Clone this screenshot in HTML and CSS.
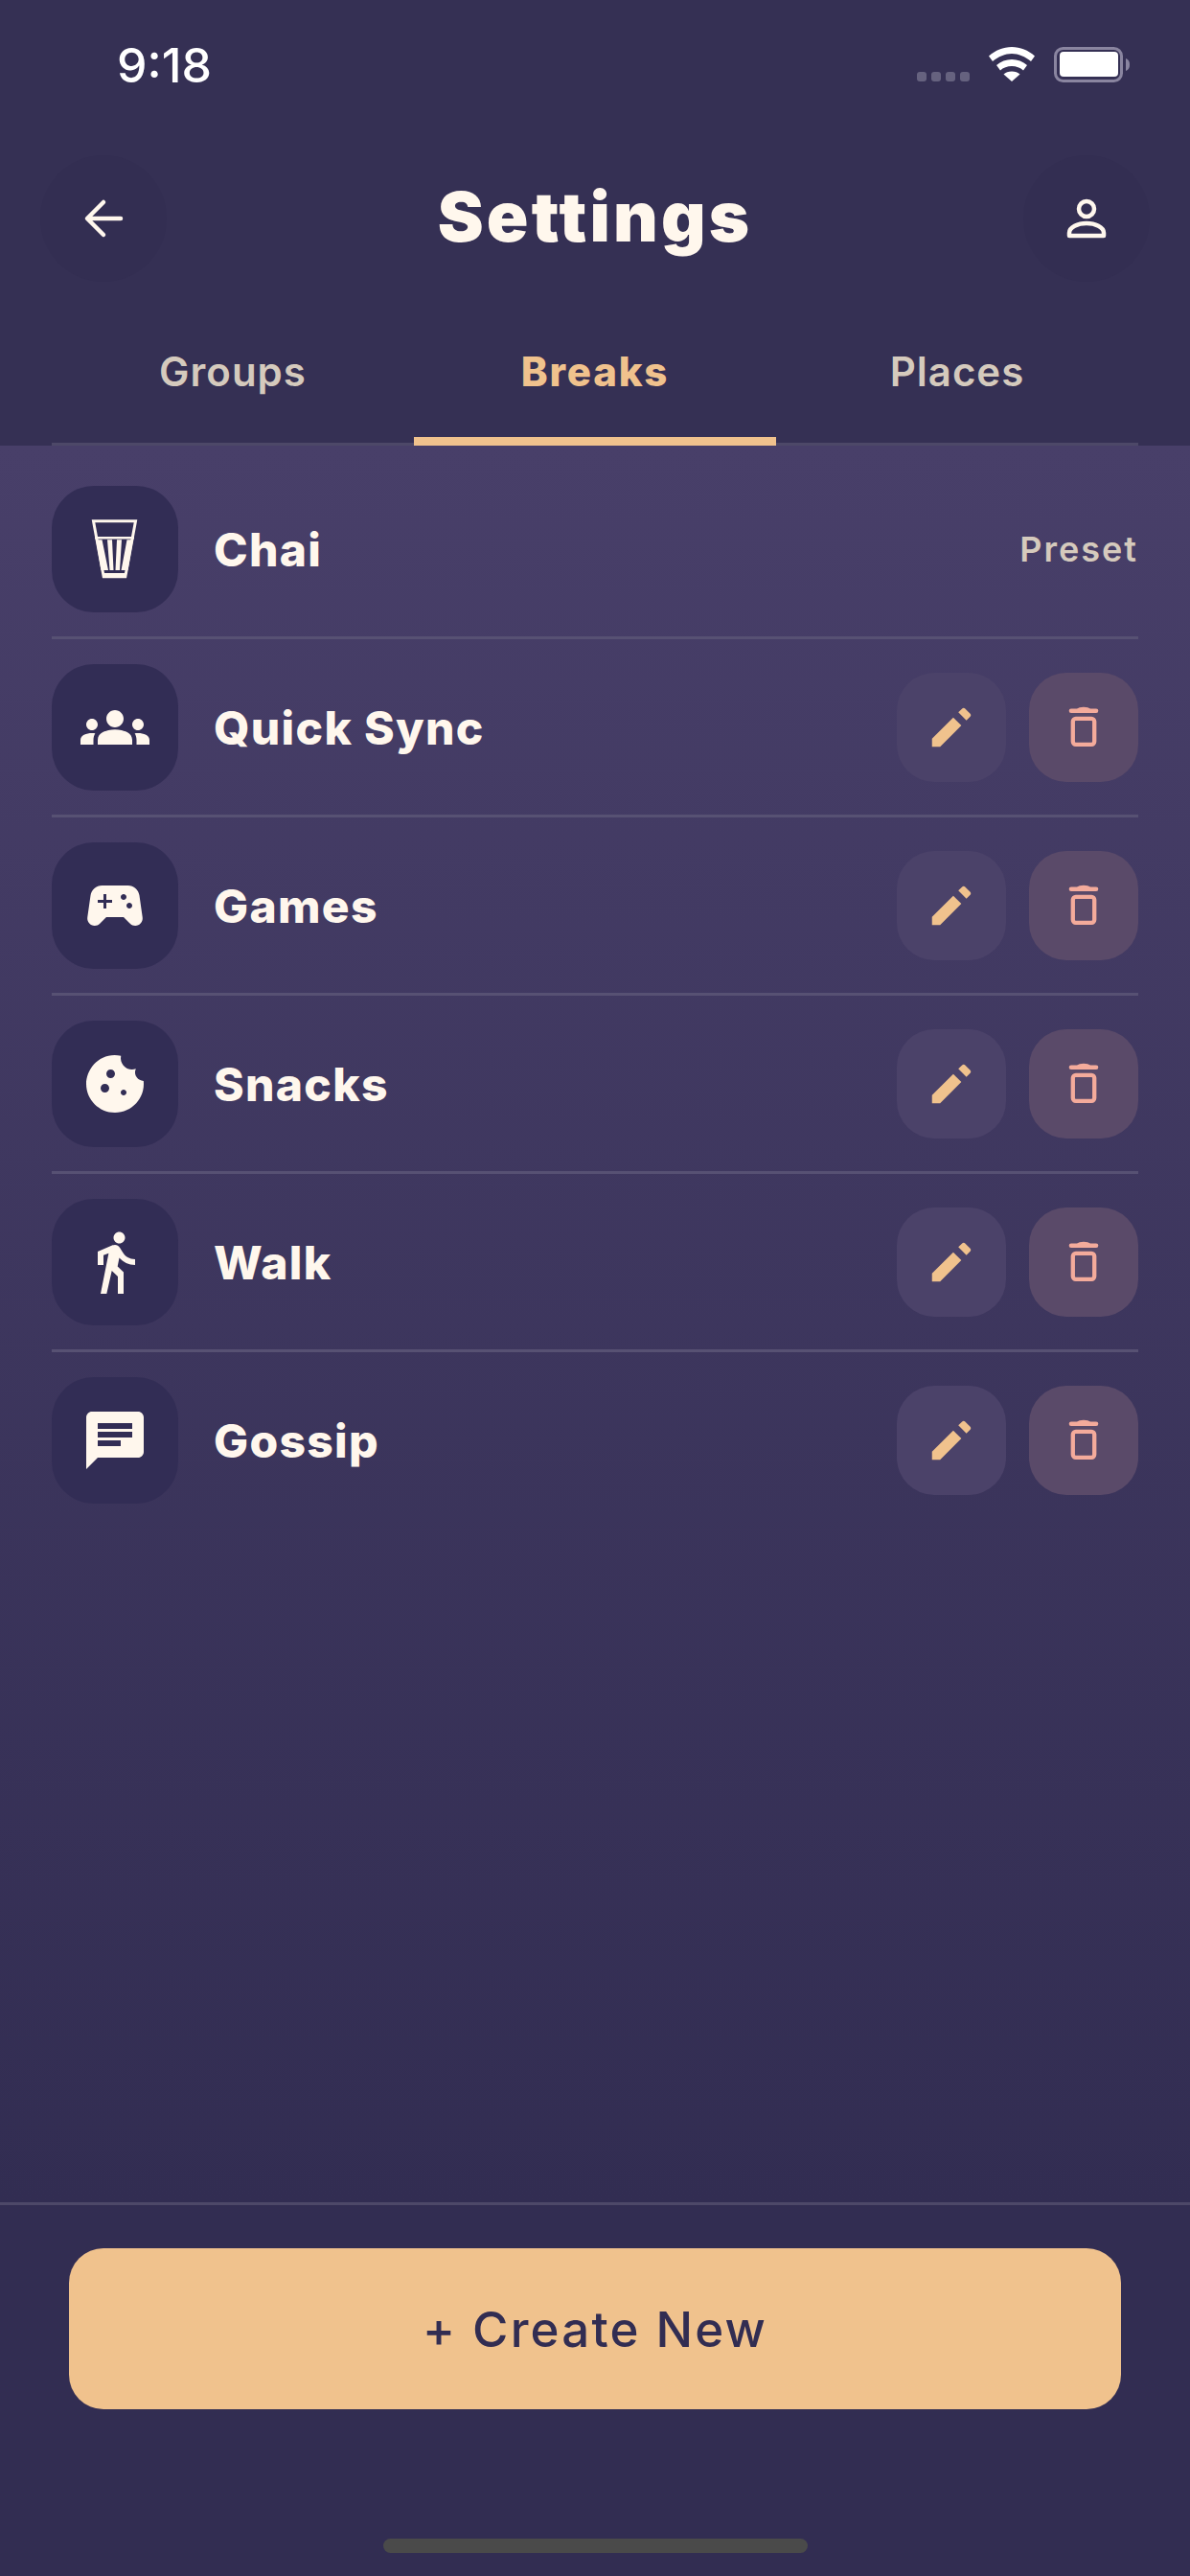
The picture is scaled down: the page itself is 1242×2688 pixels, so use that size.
FILE: index.html
```html
<!DOCTYPE html>
<html lang="en">
<head>
<meta charset="utf-8">
<title>Settings</title>
<link rel="stylesheet" href="styles.css">
</head>
<body>
<div class="app">
  <header class="top">
    <div class="status">
      <span class="time">9:18</span>
      <div class="status-icons">
        <div class="signal"><i></i><i></i><i></i><i></i></div>
        <svg class="wifi" viewBox="0 0 48 36"><path d="M24 0C15 0 7 3.500 0 9.500L4 15C10 10 17 7 24 7s14 3 20 8l4-5.500C41 3.500 33 0 24 0z"/><path d="M24 13c-6 0-11.500 2-16 6l4 5.500c3-3 7.500-4.500 12-4.500s9 1.500 12 4.500l4-5.500c-4.500-4-10-6-16-6z"/><path d="M24 25.500c-3.500 0-6.500 1-8.500 3L24 36l8.500-7.500c-2-2-5-3-8.500-3z"/></svg>
        <svg class="battery" viewBox="0 0 80 38"><rect x="1.500" y="1.500" width="69" height="34" rx="8" fill="none" stroke="#8a85a0" stroke-width="3"/><rect x="6" y="5" width="61" height="26" rx="4" fill="#fff"/><path d="M75 12c3 1 4 3.500 4 6.500s-1 5.500-4 6.500z" fill="#8a85a0"/></svg>
      </div>
    </div>
    <div class="titlebar">
      <button class="round"><svg class="ico-nav" viewBox="0 0 54 54"><path d="M45 27H11M27 10L10 27l17 17"/></svg></button>
      <h1>Settings</h1>
      <button class="round"><svg class="ico-nav" viewBox="0 0 54 54"><circle cx="27" cy="17" r="8"/><path d="M9 45v-3c0-6 9-10 18-10s18 4 18 10v3z"/></svg></button>
    </div>
    <nav class="tabs">
      <a class="tab">Groups</a>
      <a class="tab active">Breaks</a>
      <a class="tab">Places</a>
    </nav>
  </header>

  <main class="content">
    <ul class="list">
      <li class="row">
        <span class="badge"><svg class="ico" viewBox="0 0 72 72"><path d="M13.500 6.800h44L46.800 64.800H24.200z" fill="none" stroke="currentColor" stroke-width="3"/><path d="M15 24.200h41" stroke="currentColor" stroke-width="2.400"/><path fill-rule="evenodd" d="M16 26.300h39L49.500 58h-28zM22.500 26.300h5.500l2.500 31.700h-1.500zM33 26.300h5L36.500 58h-2zM43 26.300h5.500L42.500 58H41z"/><path d="M23 61h25v5H23z"/></svg></span>
        <span class="name">Chai</span>
        <span class="preset">Preset</span>
      </li>
      <li class="row">
        <span class="badge"><svg class="ico" viewBox="0 0 24 24"><path d="M12 12.750c1.630 0 3.070.39 4.240.9 1.080.48 1.760 1.560 1.760 2.730V18H6v-1.610c0-1.180.68-2.260 1.760-2.730 1.170-.52 2.610-.91 4.240-.91zM4 13c1.100 0 2-.9 2-2s-.9-2-2-2-2 .9-2 2 .9 2 2 2zm1.130 1.100c-.37-.06-.74-.1-1.130-.1-.99 0-1.930.21-2.780.58C.48 14.900 0 15.620 0 16.430V18h4.500v-1.610c0-.83.23-1.610.63-2.290zM20 13c1.100 0 2-.9 2-2s-.9-2-2-2-2 .9-2 2 .9 2 2 2zm4 3.430c0-.81-.48-1.530-1.220-1.850-.85-.37-1.790-.58-2.780-.58-.39 0-.76.04-1.130.1.4.68.63 1.460.63 2.290V18H24v-1.570zM12 6c1.660 0 3 1.340 3 3s-1.340 3-3 3-3-1.340-3-3 1.340-3 3-3z"/></svg></span>
        <span class="name">Quick Sync</span>
        <div class="actions">
          <button class="act edit"><svg class="ico-act" viewBox="0 0 24 24"><path d="M3 17.250V21h3.750l9.850-9.850-3.750-3.750zM20.710 7.040c.39-.39.39-1.020 0-1.410l-2.340-2.340c-.39-.39-1.020-.39-1.410 0L15.200 5l3.750 3.750z"/></svg></button>
          <button class="act del"><svg class="ico-act" viewBox="0 0 54 54"><rect x="11.700" y="7.500" width="30.600" height="4.500" rx="2.250"/><path d="M20 8c2-3 12-3 14 0z"/><rect x="15.800" y="17.800" width="22.400" height="27" rx="3" fill="none" stroke="currentColor" stroke-width="4.300"/></svg></button>
        </div>
      </li>
      <li class="row">
        <span class="badge"><svg class="ico" viewBox="0 0 24 24"><path d="M21.580 16.090l-1.090-7.660C20.210 6.460 18.520 5 16.530 5H7.470C5.480 5 3.790 6.460 3.510 8.430l-1.090 7.660C2.200 17.630 3.390 19 4.940 19c.68 0 1.320-.27 1.800-.75L9 16h6l2.250 2.250c.48.48 1.130.75 1.800.75 1.560 0 2.750-1.370 2.530-2.910zM11 11H9v2H8v-2H6v-1h2V8h1v2h2v1zm4-1c-.55 0-1-.45-1-1s.45-1 1-1 1 .45 1 1-.45 1-1 1zm2 3c-.55 0-1-.45-1-1s.45-1 1-1 1 .45 1 1-.45 1-1 1z"/></svg></span>
        <span class="name">Games</span>
        <div class="actions">
          <button class="act edit"><svg class="ico-act" viewBox="0 0 24 24"><path d="M3 17.250V21h3.750l9.850-9.850-3.750-3.750zM20.710 7.040c.39-.39.39-1.020 0-1.410l-2.340-2.340c-.39-.39-1.020-.39-1.410 0L15.200 5l3.750 3.750z"/></svg></button>
          <button class="act del"><svg class="ico-act" viewBox="0 0 54 54"><rect x="11.700" y="7.500" width="30.600" height="4.500" rx="2.250"/><path d="M20 8c2-3 12-3 14 0z"/><rect x="15.800" y="17.800" width="22.400" height="27" rx="3" fill="none" stroke="currentColor" stroke-width="4.300"/></svg></button>
        </div>
      </li>
      <li class="row">
        <span class="badge"><svg class="ico" viewBox="0 0 24 24"><path d="M21.950 10.990c-1.790-.03-3.700-1.950-2.680-4.220-2.980 1-5.770-1.590-5.190-4.560C6.950.71 2 6.580 2 12c0 5.520 4.480 10 10 10 5.890 0 10.540-5.080 9.950-11.010zM8.500 15c-.83 0-1.500-.67-1.500-1.500S7.670 12 8.500 12s1.500.67 1.500 1.500S9.330 15 8.500 15zm2-5C9.670 10 9 9.330 9 8.500S9.670 7 10.500 7s1.500.67 1.500 1.500-.67 1.500-1.500 1.500zm4.500 6c-.55 0-1-.45-1-1s.45-1 1-1 1 .45 1 1-.45 1-1 1z"/></svg></span>
        <span class="name">Snacks</span>
        <div class="actions">
          <button class="act edit"><svg class="ico-act" viewBox="0 0 24 24"><path d="M3 17.250V21h3.750l9.850-9.850-3.750-3.750zM20.710 7.040c.39-.39.39-1.020 0-1.410l-2.340-2.340c-.39-.39-1.020-.39-1.410 0L15.200 5l3.750 3.750z"/></svg></button>
          <button class="act del"><svg class="ico-act" viewBox="0 0 54 54"><rect x="11.700" y="7.500" width="30.600" height="4.500" rx="2.250"/><path d="M20 8c2-3 12-3 14 0z"/><rect x="15.800" y="17.800" width="22.400" height="27" rx="3" fill="none" stroke="currentColor" stroke-width="4.300"/></svg></button>
        </div>
      </li>
      <li class="row">
        <span class="badge"><svg class="ico" viewBox="0 0 24 24"><path d="M13.500 5.500c1.100 0 2-.9 2-2s-.9-2-2-2-2 .9-2 2 .9 2 2 2zM9.800 8.900L7 23h2.100l1.800-8 2.100 2v6h2v-7.500l-2.100-2 .6-3C14.800 12 16.800 13 19 13v-2c-1.900 0-3.500-1-4.300-2.400l-1-1.600c-.4-.6-1-1-1.700-1-.3 0-.5.1-.8.1L6 8.300V13h2V9.600l1.800-.7"/></svg></span>
        <span class="name">Walk</span>
        <div class="actions">
          <button class="act edit"><svg class="ico-act" viewBox="0 0 24 24"><path d="M3 17.250V21h3.750l9.850-9.850-3.750-3.750zM20.710 7.040c.39-.39.39-1.020 0-1.410l-2.340-2.340c-.39-.39-1.020-.39-1.410 0L15.200 5l3.750 3.750z"/></svg></button>
          <button class="act del"><svg class="ico-act" viewBox="0 0 54 54"><rect x="11.700" y="7.500" width="30.600" height="4.500" rx="2.250"/><path d="M20 8c2-3 12-3 14 0z"/><rect x="15.800" y="17.800" width="22.400" height="27" rx="3" fill="none" stroke="currentColor" stroke-width="4.300"/></svg></button>
        </div>
      </li>
      <li class="row">
        <span class="badge"><svg class="ico" viewBox="0 0 24 24"><path d="M20 2H4c-1.100 0-1.990.9-1.990 2L2 22l4-4h14c1.100 0 2-.9 2-2V4c0-1.100-.9-2-2-2zM6 9h12v2H6V9zm8 5H6v-2h8v2zm4-6H6V6h12v2z"/></svg></span>
        <span class="name">Gossip</span>
        <div class="actions">
          <button class="act edit"><svg class="ico-act" viewBox="0 0 24 24"><path d="M3 17.250V21h3.750l9.850-9.850-3.750-3.750zM20.710 7.040c.39-.39.39-1.020 0-1.410l-2.340-2.340c-.39-.39-1.020-.39-1.410 0L15.200 5l3.750 3.750z"/></svg></button>
          <button class="act del"><svg class="ico-act" viewBox="0 0 54 54"><rect x="11.700" y="7.500" width="30.600" height="4.500" rx="2.250"/><path d="M20 8c2-3 12-3 14 0z"/><rect x="15.800" y="17.800" width="22.400" height="27" rx="3" fill="none" stroke="currentColor" stroke-width="4.300"/></svg></button>
        </div>
      </li>
    </ul>
  </main>

  <footer class="bottom">
    <button class="create">+ Create New</button>
    <div class="home"></div>
  </footer>
</div>
</body>
</html>
```
FILE: styles.css
```css
* { box-sizing: border-box; }
html, body { margin: 0; padding: 0; }
body { width: 1242px; height: 2688px; overflow: hidden; font-family: Inter, "Liberation Sans", sans-serif; color: #fff7ed; background: #322d52; }
button { border: 0; padding: 0; font-family: inherit; }
.app { width: 1242px; height: 2688px; display: flex; flex-direction: column; }

.top { height: 465px; background: #353054; display: flex; flex-direction: column; flex: none; }
.status { height: 162px; display: flex; justify-content: space-between; padding: 42px 62px 0 122px; flex: none; }
.time { font-size: 50px; font-weight: 500; line-height: 52px; color: #fff; }
.status-icons { display: flex; align-items: flex-start; }
.signal { display: flex; gap: 5px; margin: 33px 20px 0 0; }
.signal i { width: 10px; height: 10px; border-radius: 3px; background: #66627f; display: block; }
.wifi { width: 48px; height: 36px; fill: #fff; margin: 7px 20px 0 0; }
.battery { width: 80px; height: 38px; margin-top: 7px; }

.titlebar { display: flex; align-items: center; justify-content: space-between; padding: 0 42px; height: 132px; flex: none; }
.round { width: 132px; height: 132px; border-radius: 50%; background: #332e52; display: flex; align-items: center; justify-content: center; }
.ico-nav { width: 54px; height: 54px; fill: none; stroke: #fff7ed; stroke-width: 4.500; stroke-linecap: round; stroke-linejoin: round; }
h1 { margin: 0; padding-bottom: 5px; font-size: 72px; font-weight: 900; line-height: 90px; letter-spacing: 3.200px; color: #fff7ed; }

.tabs { display: flex; margin: 0 54px; padding-top: 30px; height: 171px; border-bottom: 3px solid #4d4868; flex: none; }
.tab { flex: 1; height: 141px; margin-bottom: -3px; display: flex; align-items: flex-start; justify-content: center; padding-top: 38px; font-size: 42px; font-weight: 600; letter-spacing: 1px; line-height: 52px; color: #d5cabd; }
.tab.active { color: #f0c28d; font-weight: 800; letter-spacing: 1.800px; border-bottom: 9px solid #f0c28d; }

.content { flex: 1; background: linear-gradient(180deg, #483f69 0%, #322d52 100%); padding: 16px 54px 0; min-height: 0; }
.list { list-style: none; margin: 0; padding: 0; }
.row { height: 186px; padding: 26px 0 25px; display: flex; align-items: center; border-bottom: 3px solid #575173; }
.row:last-child { border-bottom-color: transparent; }
.badge { width: 132px; height: 132px; border-radius: 44px; background: #322d55; display: flex; align-items: center; justify-content: center; flex: none; margin-right: 37px; }
.ico { width: 72px; height: 72px; fill: #fff7ed; color: #fff7ed; display: block; }
.name { flex: 1; padding-top: 1px; font-size: 48px; font-weight: 800; letter-spacing: 1.300px; color: #fff7ed; }
.preset { font-size: 36px; font-weight: 600; letter-spacing: 2px; color: #d5cabd; }
.actions { display: flex; gap: 24px; }
.act { width: 114px; height: 114px; border-radius: 39px; display: flex; align-items: center; justify-content: center; }
.edit { background: #4b4269; }
.del { background: #5a4a69; }
.ico-act { width: 54px; height: 54px; display: block; }
.edit .ico-act { fill: #f0c28d; }
.del .ico-act { fill: #f4ab9b; color: #f4ab9b; }

.bottom { height: 390px; flex: none; background: #322d52; border-top: 3px solid #4d4868; display: flex; flex-direction: column; align-items: center; padding-top: 45px; }
.create { width: 1098px; height: 168px; border-radius: 36px; background: #f0c28d; color: #322d52; font-size: 51px; font-weight: 500; letter-spacing: 2.200px; }
.home { width: 443px; height: 15px; border-radius: 8px; background: #4a4a4a; margin-top: 135px; }
```
